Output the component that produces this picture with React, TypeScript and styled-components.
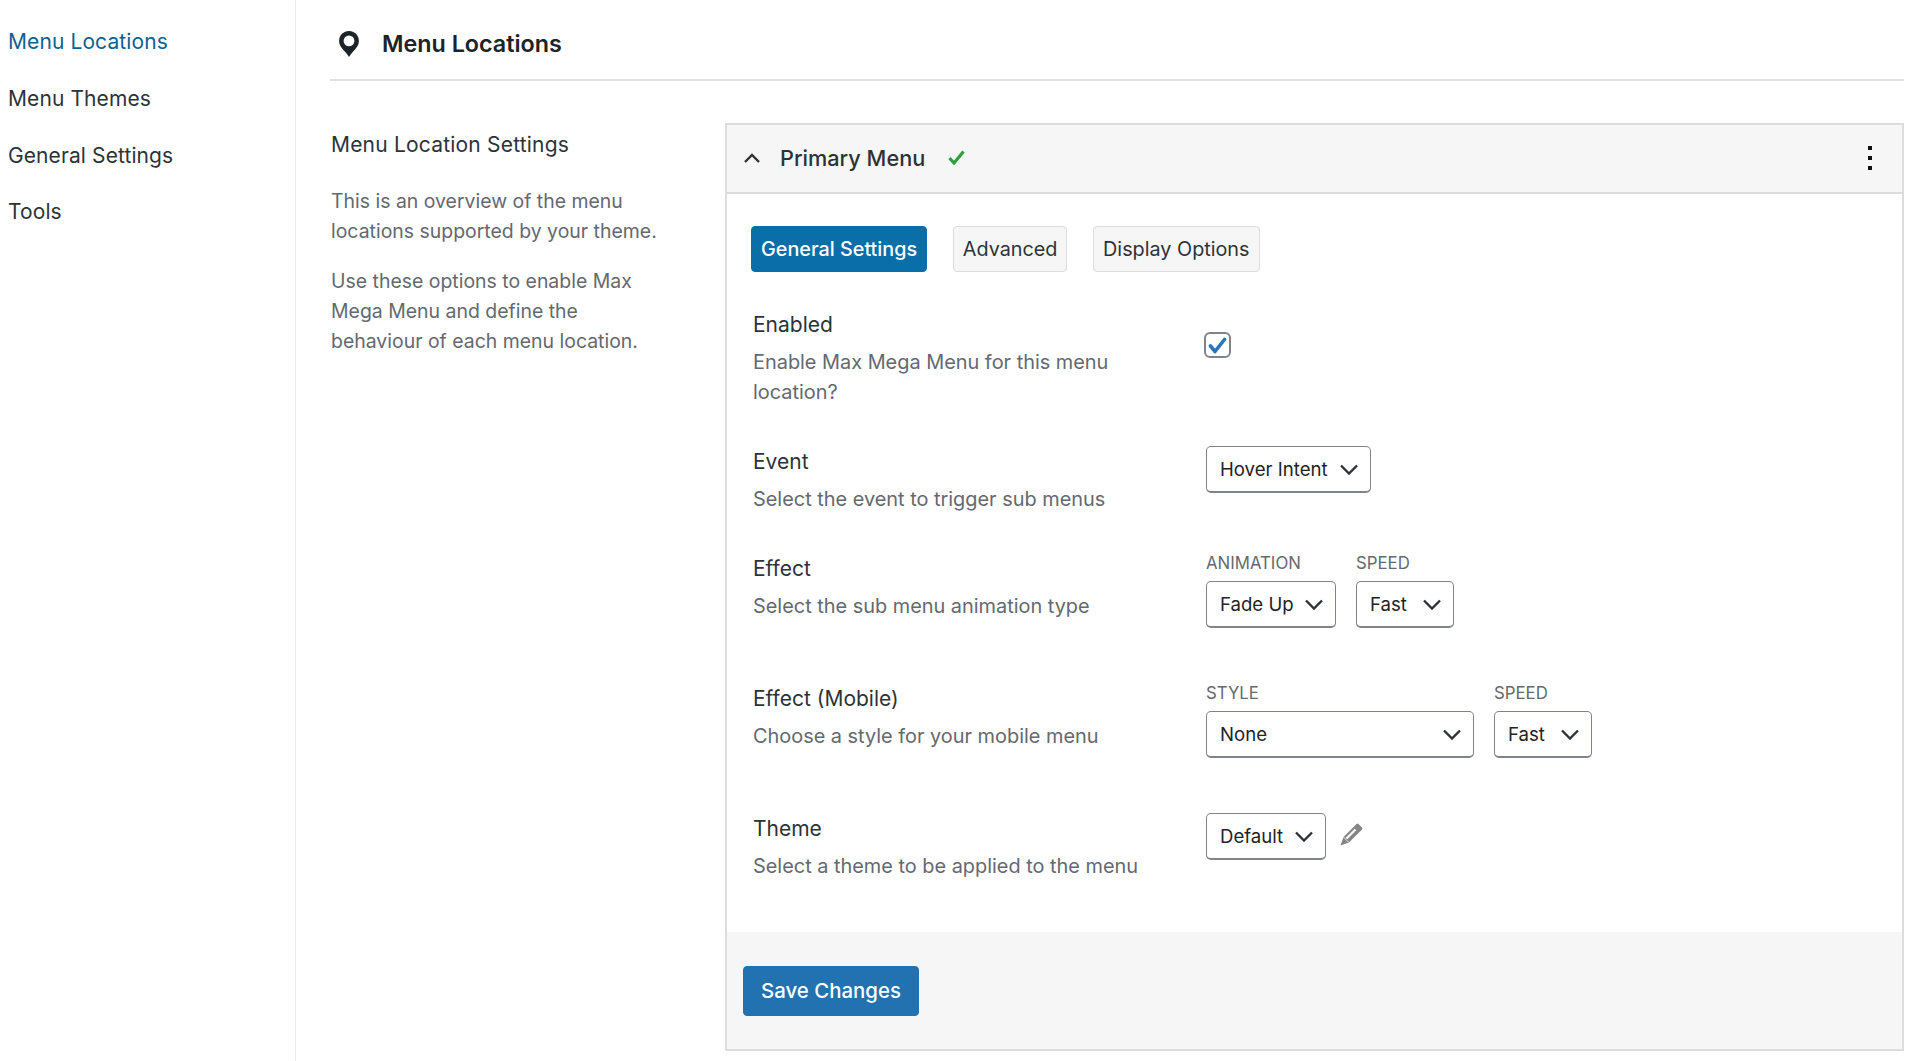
import React from 'react';
import styled, { createGlobalStyle } from 'styled-components';

const GlobalStyle = createGlobalStyle`
  html, body {
    margin: 0;
    padding: 0;
    background: #fff;
  }
  body {
    font-family: Inter, "Noto Sans", "Liberation Sans", sans-serif;
    color: #2c3338;
  }
`;

const Page = styled.div`
  display: flex;
  height: 1061px;
  overflow: hidden;
  background: #fff;
`;

const Sidebar = styled.nav`
  width: 287px;
  flex-shrink: 0;
  box-sizing: content-box;
  border-right: 1px solid #ececec;
  padding: 20px 0 0 8px;
  display: flex;
  flex-direction: column;
  gap: 12.800px;
`;

const NavItem = styled.a<{ $active?: boolean }>`
  font-size: 21px;
  letter-spacing: 0.1px;
  line-height: 44px;
  color: ${(p) => (p.$active ? '#0b6290' : '#2c3338')};
`;

const Main = styled.main`
  flex: 1;
  min-width: 0;
  margin-left: 34px;
  margin-right: 15px;
`;

const Header = styled.header`
  height: 70px;
  display: flex;
  align-items: center;
  gap: 23.500px;
  padding: 9px 0 0 8.500px;
  border-bottom: 2px solid #e0e0e0;
`;

const PageTitle = styled.h1`
  margin: -1px 0 0;
  font-size: 23.300px;
  font-weight: 600;
  color: #1d2327;
`;

const Content = styled.div`
  display: flex;
  margin-top: 42px;
`;

const Intro = styled.aside`
  width: 395px;
  flex-shrink: 0;
  padding: 7px 0 0 1px;
  box-sizing: border-box;
`;

const IntroTitle = styled.h2`
  margin: 0 0 26px;
  font-size: 21px;
  letter-spacing: 0.2px;
  font-weight: 400;
  line-height: 30px;
  color: #2c3338;
`;

const IntroText = styled.p`
  margin: 0 0 20px;
  max-width: 340px;
  font-size: 19.450px;
  line-height: 30px;
  color: #646970;
`;

const Box = styled.section`
  flex: 1;
  min-width: 0;
  height: 928px;
  display: flex;
  flex-direction: column;
  border: 2px solid #dddddd;
  box-sizing: border-box;
`;

const BoxHeader = styled.div`
  height: 69px;
  flex-shrink: 0;
  display: flex;
  align-items: center;
  padding: 0 30px 2px 17px;
  background: #f6f6f6;
  border-bottom: 2px solid #dddddd;
  box-sizing: border-box;
`;

const BoxTitle = styled.h3`
  margin: 0 0 0 20px;
  font-size: 21.700px;
  font-weight: 500;
  color: #2c3338;
`;

const Spacer = styled.div`
  flex: 1;
`;

const DotsColumn = styled.div`
  display: flex;
  flex-direction: column;
  gap: 6px;
`;

const Dot = styled.span`
  width: 4px;
  height: 4px;
  background: #111;
`;

const BoxBody = styled.div`
  flex: 1;
  padding: 32px 0 0 25px;
`;

const Tabs = styled.div`
  display: flex;
  margin: 0 0 37px -1px;
`;

const Tab = styled.button<{ $active?: boolean }>`
  height: 46px;
  padding: 0 9px;
  margin-right: 25.700px;
  font: inherit;
  font-size: 19.800px;
  border-radius: 4px;
  border: 1px solid ${(p) => (p.$active ? '#0a6fa8' : '#dcdcde')};
  background: ${(p) => (p.$active ? '#0a6fa8' : '#f6f6f6')};
  color: ${(p) => (p.$active ? '#fff' : '#2c3338')};
  font-weight: ${(p) => (p.$active ? 500 : 400)};
`;

const Rows = styled.div`
  display: flex;
  flex-direction: column;
  gap: 40px;
  margin-left: 1px;
`;

const Row = styled.div`
  display: grid;
  grid-template-columns: 453px 1fr;
`;

const RowLabel = styled.div`
  padding-top: 1px;
  font-size: 21px;
  line-height: 30px;
  color: #2c3338;
`;

const RowDesc = styled.div`
  margin: 7px 0 -1px;
  max-width: 400px;
  font-size: 19.900px;
  line-height: 30px;
  color: #646970;
`;

const Controls = styled.div<{ $inset?: number }>`
  display: flex;
  align-items: flex-start;
  gap: 20px;
  padding-top: ${(p) => p.$inset ?? 0}px;
`;

const Field = styled.div`
  display: flex;
  flex-direction: column;
  padding-bottom: 15px;
`;

const FieldLabel = styled.label`
  height: 20px;
  margin-bottom: 8px;
  font-size: 16.800px;
  line-height: 20px;
  text-transform: uppercase;
  color: #646970;
`;

const SelectBox = styled.div<{ $width: number }>`
  width: ${(p) => p.$width}px;
  height: 47px;
  display: flex;
  align-items: center;
  justify-content: space-between;
  padding: 0 12px 0 13px;
  box-sizing: border-box;
  border: 1px solid #80848a;
  border-bottom-width: 2px;
  border-radius: 5px;
  background: #fff;
  font-size: 18.600px;
  color: #1d2327;
`;

const Check = styled.div`
  width: 27px;
  height: 26px;
  display: flex;
  align-items: center;
  justify-content: center;
  border: 2px solid #80848a;
  border-radius: 6px;
  box-sizing: border-box;
  margin-left: -2px;
`;

const EditLink = styled.span`
  margin: 10px 0 0 -6px;
  line-height: 0;
`;

const BoxFooter = styled.div`
  height: 117px;
  flex-shrink: 0;
  display: flex;
  align-items: flex-start;
  padding: 34px 0 0 16px;
  background: #f6f6f6;
  box-sizing: border-box;
`;

const SaveButton = styled.button`
  width: 176px;
  height: 50px;
  padding: 0 0 2px;
  font: inherit;
  font-size: 20.400px;
  font-weight: 500;
  border: 1px solid #2271b1;
  border-radius: 4px;
  background: #2271b1;
  color: #fff;
`;

function ChevronDown() {
  return (
    <svg width="18" height="11" viewBox="0 0 18 11">
      <path d="M1 1.500l8 8 8-8" fill="none" stroke="#2c3338" strokeWidth="2.400" />
    </svg>
  );
}

function ChevronUp() {
  return (
    <svg width="16" height="10" viewBox="0 0 16 10">
      <path d="M1 9l7-7 7 7" fill="none" stroke="#2c3338" strokeWidth="2.400" />
    </svg>
  );
}

function Select({ value, width }: { value: string; width: number }) {
  return (
    <SelectBox $width={width}>
      <span>{value}</span>
      <ChevronDown />
    </SelectBox>
  );
}

function PinIcon() {
  return (
    <svg width="20" height="26" viewBox="0 0 19 25">
      <path
        fillRule="evenodd"
        fill="#1d2327"
        d="M9.500 0C4.200 0 0 4.200 0 9.500c0 4.500 3.200 7.500 5.500 10.200 1.600 1.900 3 3.600 4 5.300 1-1.700 2.400-3.400 4-5.300C15.800 17 19 14 19 9.500 19 4.200 14.800 0 9.500 0Zm0 4.300a5.200 5.200 0 1 1 0 10.400 5.200 5.200 0 0 1 0-10.400Z"
      />
    </svg>
  );
}

function GreenCheck() {
  return (
    <svg width="17" height="15" viewBox="0 0 17 15" style={{ marginLeft: 23 }}>
      <path d="M1.500 8l4.500 5L15.500 1.500" fill="none" stroke="#2ea043" strokeWidth="3.200" />
    </svg>
  );
}

function BlueCheck() {
  return (
    <svg width="19" height="17" viewBox="0 0 19 17">
      <path
        d="M2.500 9l4.500 5.500L16.500 2.500"
        fill="none"
        stroke="#2b76b9"
        strokeWidth="3.600"
        strokeLinecap="round"
        strokeLinejoin="round"
      />
    </svg>
  );
}

function PencilIcon() {
  return (
    <svg width="23" height="23" viewBox="0 0 23 23">
      <path
        fill="#858585"
        d="M.5 22.500 3.500 14 16.500 1q1-1 2 0L22 4.500q1 1 0 2L9 19.500Z"
      />
      <path d="M6.500 15.500 15.500 6.500" stroke="#fff" strokeWidth="2.200" />
      <path d="M3.500 14 9 19.500" stroke="#fff" strokeWidth="0.800" />
    </svg>
  );
}

export default function App() {
  return (
    <>
      <GlobalStyle />
      <Page>
        <Sidebar>
          <NavItem $active>Menu Locations</NavItem>
          <NavItem>Menu Themes</NavItem>
          <NavItem>General Settings</NavItem>
          <NavItem>Tools</NavItem>
        </Sidebar>
        <Main>
          <Header>
            <PinIcon />
            <PageTitle>Menu Locations</PageTitle>
          </Header>
          <Content>
            <Intro>
              <IntroTitle>Menu Location Settings</IntroTitle>
              <IntroText>This is an overview of the menu locations supported by your theme.</IntroText>
              <IntroText>Use these options to enable Max Mega Menu and define the behaviour of each menu location.</IntroText>
            </Intro>
            <Box>
              <BoxHeader>
                <ChevronUp />
                <BoxTitle>Primary Menu</BoxTitle>
                <GreenCheck />
                <Spacer />
                <DotsColumn>
                  <Dot />
                  <Dot />
                  <Dot />
                </DotsColumn>
              </BoxHeader>
              <BoxBody>
                <Tabs>
                  <Tab $active>General Settings</Tab>
                  <Tab>Advanced</Tab>
                  <Tab>Display Options</Tab>
                </Tabs>
                <Rows>
                  <Row>
                    <div>
                      <RowLabel>Enabled</RowLabel>
                      <RowDesc>Enable Max Mega Menu for this menu location?</RowDesc>
                    </div>
                    <Controls $inset={23}>
                      <Check>
                        <BlueCheck />
                      </Check>
                    </Controls>
                  </Row>
                  <Row>
                    <div>
                      <RowLabel>Event</RowLabel>
                      <RowDesc>Select the event to trigger sub menus</RowDesc>
                    </div>
                    <Controls>
                      <Select value="Hover Intent" width={165} />
                    </Controls>
                  </Row>
                  <Row>
                    <div>
                      <RowLabel>Effect</RowLabel>
                      <RowDesc>Select the sub menu animation type</RowDesc>
                    </div>
                    <Controls>
                      <Field>
                        <FieldLabel>Animation</FieldLabel>
                        <Select value="Fade Up" width={130} />
                      </Field>
                      <Field>
                        <FieldLabel>Speed</FieldLabel>
                        <Select value="Fast" width={98} />
                      </Field>
                    </Controls>
                  </Row>
                  <Row>
                    <div>
                      <RowLabel>Effect (Mobile)</RowLabel>
                      <RowDesc>Choose a style for your mobile menu</RowDesc>
                    </div>
                    <Controls>
                      <Field>
                        <FieldLabel>Style</FieldLabel>
                        <Select value="None" width={268} />
                      </Field>
                      <Field>
                        <FieldLabel>Speed</FieldLabel>
                        <Select value="Fast" width={98} />
                      </Field>
                    </Controls>
                  </Row>
                  <Row>
                    <div>
                      <RowLabel>Theme</RowLabel>
                      <RowDesc>Select a theme to be applied to the menu</RowDesc>
                    </div>
                    <Controls>
                      <Select value="Default" width={120} />
                      <EditLink>
                        <PencilIcon />
                      </EditLink>
                    </Controls>
                  </Row>
                </Rows>
              </BoxBody>
              <BoxFooter>
                <SaveButton>Save Changes</SaveButton>
              </BoxFooter>
            </Box>
          </Content>
        </Main>
      </Page>
    </>
  );
}
